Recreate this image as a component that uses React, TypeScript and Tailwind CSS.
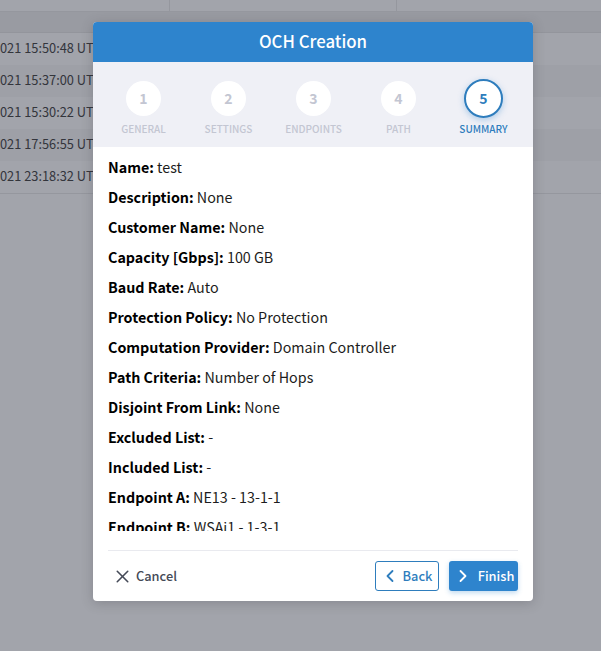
import { ChevronLeft, ChevronRight, X } from 'lucide-react'

const font = { fontFamily: '"Noto Sans CJK SC", "Noto Sans", sans-serif' }

const steps = [
  { n: 1, label: 'GENERAL' },
  { n: 2, label: 'SETTINGS' },
  { n: 3, label: 'ENDPOINTS' },
  { n: 4, label: 'PATH' },
  { n: 5, label: 'SUMMARY', active: true },
]

const summary = [
  ['Name:', 'test'],
  ['Description:', 'None'],
  ['Customer Name:', 'None'],
  ['Capacity [Gbps]:', '100 GB'],
  ['Baud Rate:', 'Auto'],
  ['Protection Policy:', 'No Protection'],
  ['Computation Provider:', 'Domain Controller'],
  ['Path Criteria:', 'Number of Hops'],
  ['Disjoint From Link:', 'None'],
  ['Excluded List:', '-'],
  ['Included List:', '-'],
  ['Endpoint A:', 'NE13 - 13-1-1'],
  ['Endpoint B:', 'WSAi1 - 1-3-1'],
]

const rows = ['021 15:50:48 UTC', '021 15:37:00 UTC', '021 15:30:22 UTC', '021 17:56:55 UTC', '021 23:18:32 UTC']

export default function App() {
  return (
    <div className="relative h-[651px] w-[601px] overflow-hidden bg-[#a2a4ab]" style={font}>
      {/* table behind the overlay */}
      <div className="flex h-[12px] border-b border-[#95979e]">
        <div className="w-[170px] border-r border-[#95979e]" />
        <div className="w-[227px] border-r border-[#95979e]" />
      </div>
      <div className="h-[21px] border-b border-[#93959c] bg-[#999ba2]" />
      {rows.map((r, i) => (
        <div
          key={r}
          className={`flex h-[32px] items-center pb-[3px] text-[12.8px] text-[#33353c] ${i % 2 === 1 ? 'bg-[#9ea0a7]' : 'bg-[#a2a4ab]'}`}
        >
          {r}
        </div>
      ))}
      <div className="border-t border-[#95979e]" />

      {/* modal */}
      <div className="absolute left-[93px] top-[22px] flex h-[579px] w-[440px] flex-col overflow-hidden rounded-[4px] bg-white shadow-[0_2px_12px_rgba(50,50,60,0.25)]">
        <div className="flex h-[40px] shrink-0 items-center justify-center bg-[#2e84cd] text-[16.8px] font-medium text-white">
          OCH Creation
        </div>
        <div className="flex h-[85px] shrink-0 bg-[#eff0f6] pl-[8px] pt-[18px]">
          {steps.map((s) => (
            <div key={s.n} className="flex w-[85px] flex-col items-center">
              <div className="flex h-[36px] items-center justify-center">
                <div
                  className={
                    s.active
                      ? 'flex h-[39px] w-[39px] shrink-0 items-center justify-center rounded-full border-2 border-[#2e7dbd] bg-white text-[14px] font-bold text-[#2e7dbd] shadow-[0_2px_6px_rgba(46,132,205,0.35)]'
                      : 'flex h-[35px] w-[35px] shrink-0 items-center justify-center rounded-full bg-white text-[14px] font-bold text-[#c3c6d2]'
                  }
                >
                  {s.n}
                </div>
              </div>
              <div className={`mt-[6px] text-[10px] font-medium leading-[14px] ${s.active ? 'text-[#2e7dbd]' : 'text-[#c3c6d2]'}`}>
                {s.label}
              </div>
            </div>
          ))}
        </div>
        <div className="h-[384px] shrink-0 overflow-hidden px-[15px] pt-[9px] text-[14.3px] leading-[22px] text-[#1c1c20]">
          {summary.map(([k, v]) => (
            <p key={k} className="mb-[8px] whitespace-nowrap">
              <span className="font-bold text-black">{k}</span> {v}
            </p>
          ))}
        </div>
        <div className="mx-[15px] mt-[19px] flex flex-1 items-center justify-between border-t border-[#e9eaef]">
          <button className="flex items-center gap-[3px] pl-[4px] text-[12.8px] font-medium text-[#454a57]">
            <X className="h-[21px] w-[21px]" strokeWidth={1.8} />
            Cancel
          </button>
          <div className="flex items-center gap-[10px]">
            <button className="flex h-[30px] w-[64px] items-center justify-center gap-[3px] rounded-[3px] border border-[#2e7dbd] bg-white pr-[2px] text-[12.8px] font-medium text-[#2e7dbd]">
              <ChevronLeft className="h-[20px] w-[20px]" strokeWidth={2.2} />
              Back
            </button>
            <button className="flex h-[30px] w-[69px] items-center justify-center gap-[5px] rounded-[3px] bg-[#2e84cd] text-[12.8px] font-medium text-white shadow-[0_2px_5px_rgba(46,132,205,0.3)]">
              <ChevronRight className="h-[20px] w-[20px]" strokeWidth={2.2} />
              Finish
            </button>
          </div>
        </div>
      </div>
    </div>
  )
}
